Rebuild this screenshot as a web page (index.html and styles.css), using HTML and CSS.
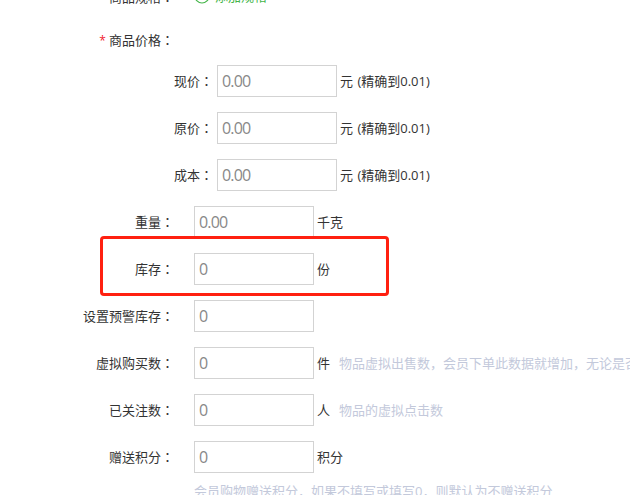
FILE: index.html
```html
<!DOCTYPE html>
<html lang="zh-CN">
<head>
<meta charset="utf-8">
<title>商品价格</title>
<link rel="stylesheet" href="styles.css">
</head>
<body>
<form class="form">
  <div class="row first"><label class="label">商品规格<i lang="zh-TW">：</i></label><a class="add"><svg width="16" height="16" viewBox="0 0 16 16"><circle cx="8" cy="8" r="7"/><path d="M8 4v8M4 8h8"/></svg>添加规格</a></div>
  <div class="row heading"><label class="label"><b class="required">*</b>商品价格<i lang="zh-TW">：</i></label></div>
  <div class="row sub"><label class="label">现价<i lang="zh-TW">：</i></label><input value="0.00"><span class="unit">元 (精确到0.01)</span></div>
  <div class="row sub"><label class="label">原价<i lang="zh-TW">：</i></label><input value="0.00"><span class="unit">元 (精确到0.01)</span></div>
  <div class="row sub"><label class="label">成本<i lang="zh-TW">：</i></label><input value="0.00"><span class="unit">元 (精确到0.01)</span></div>
  <div class="row"><label class="label">重量<i lang="zh-TW">：</i></label><input value="0.00"><span class="unit">千克</span></div>
  <div class="row marked"><label class="label">库存<i lang="zh-TW">：</i></label><input value="0"><span class="unit">份</span></div>
  <div class="row"><label class="label">设置预警库存<i lang="zh-TW">：</i></label><input value="0"></div>
  <div class="row"><label class="label">虚拟购买数<i lang="zh-TW">：</i></label><input value="0"><span class="unit">件</span><span class="hint">物品虚拟出售数，会员下单此数据就增加，无论是否</span></div>
  <div class="row"><label class="label">已关注数<i lang="zh-TW">：</i></label><input value="0"><span class="unit">人</span><span class="hint">物品的虚拟点击数</span></div>
  <div class="row"><label class="label">赠送积分<i lang="zh-TW">：</i></label><input value="0"><span class="unit">积分</span></div>
  <p class="help">会员购物赠送积分，如果不填写或填写0，则默认为不赠送积分</p>
</form>
</body>
</html>
```
FILE: styles.css
```css
body {
  margin: 0;
  height: 495px;
  overflow: hidden;
  background: #fff;
  color: #333;
  font: 13px/20px "Open Sans", "Noto Sans CJK SC", sans-serif;
}
.form { margin-top: -20px; white-space: nowrap; }
.row { display: flex; align-items: center; height: 32px; margin-bottom: 15px; position: relative; }
.row > * { flex-shrink: 0; }
.row.heading { height: 28px; margin-bottom: 10px; }
.label { width: 174px; margin-right: 20px; padding-bottom: 2px; text-align: right; }
.first .label { padding-bottom: 0; }
.label i { display: inline-block; padding-top: 2px; margin-right: 0; line-height: 18px; font-style: normal; font-family: "Noto Sans CJK TC", sans-serif; }
.sub .label { width: 213px; margin-right: 4px; }
.required { color: #f02030; font-size: 12px; font-weight: 400; margin-right: 3px; }
input {
  box-sizing: border-box;
  width: 120px;
  height: 32px;
  margin: 0;
  padding: 0 3px 1px 4px;
  border: 1px solid #d3d3d3;
  border-radius: 0;
  background: #fff;
  color: #888;
  font: 16px "Open Sans", sans-serif;
  letter-spacing: -0.8px;
}
.unit { margin-left: 3px; }
.sub .unit { word-spacing: 1px; }
.hint { margin-left: 9px; color: #c3c9db; }
.help { margin: -7px 0 0 194px; color: #c3c9db; }
.add { display: flex; align-items: center; gap: 5px; color: #44b549; }
.add svg { fill: none; stroke: #44b549; stroke-width: 1.2; }
.marked::after {
  content: "";
  position: absolute;
  left: 100px;
  top: -17px;
  box-sizing: border-box;
  width: 289px;
  height: 60px;
  border: 3px solid #ff2010;
  border-radius: 4px;
}
```
